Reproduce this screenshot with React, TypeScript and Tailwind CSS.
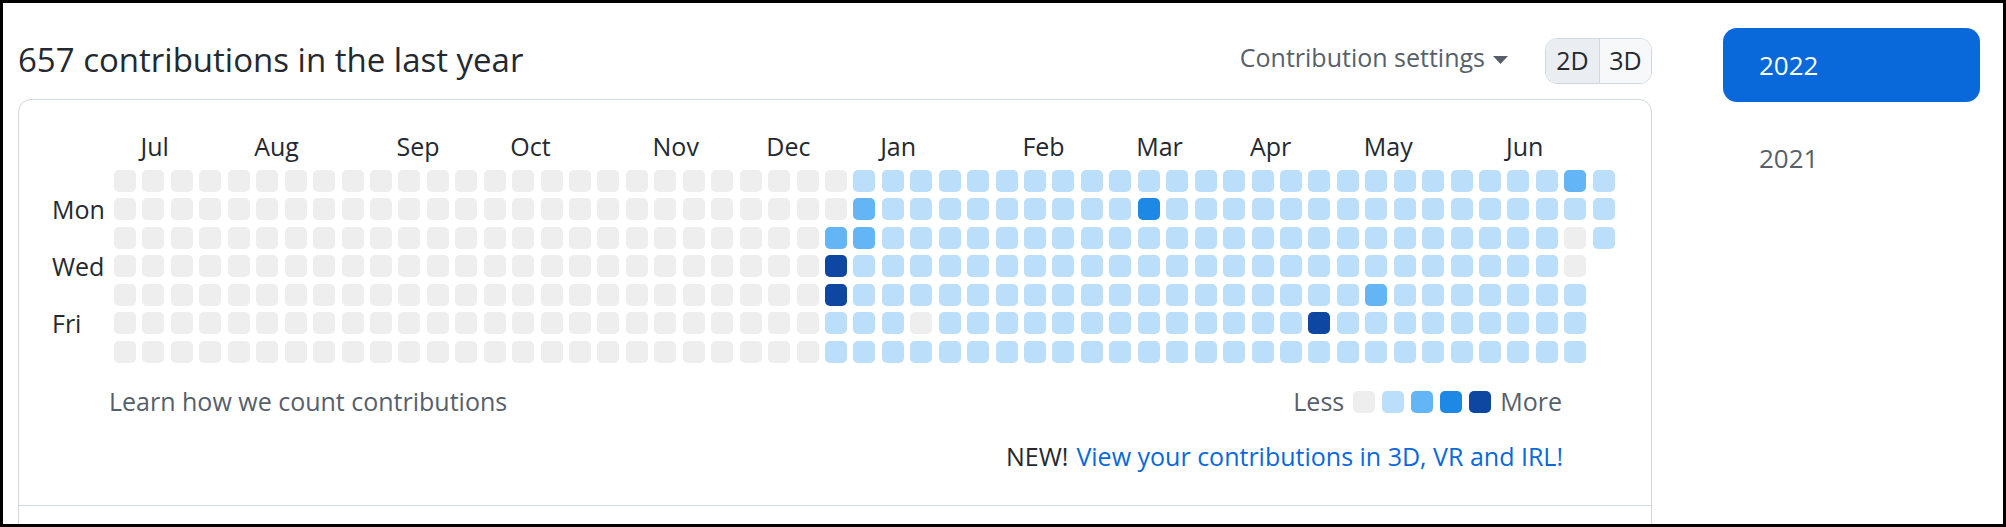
const PITCH = 28.45;

const LEVELS = ["bg-[#eeeeee]", "bg-[#bbdefb]", "bg-[#64b5f6]", "bg-[#1e88e5]", "bg-[#0d47a1]"];

const MONTHS: [string, number][] = [
  ["Jul", 1],
  ["Aug", 5],
  ["Sep", 10],
  ["Oct", 14],
  ["Nov", 19],
  ["Dec", 23],
  ["Jan", 27],
  ["Feb", 32],
  ["Mar", 36],
  ["Apr", 40],
  ["May", 44],
  ["Jun", 49],
];

const SPECIAL: Record<string, number> = {
  "25-0": 0,
  "25-1": 0,
  "25-2": 2,
  "25-3": 4,
  "25-4": 4,
  "26-1": 2,
  "26-2": 2,
  "28-5": 0,
  "36-1": 3,
  "42-5": 4,
  "44-4": 2,
  "51-0": 2,
  "51-2": 0,
  "51-3": 0,
};

function level(col: number, row: number) {
  const key = `${col}-${row}`;
  if (key in SPECIAL) return SPECIAL[key];
  if (col < 25) return 0;
  return 1;
}

const columns = Array.from({ length: 53 }, (_, c) => (c === 52 ? 3 : 7));

export default function App() {
  return (
    <div className="w-[2006px] h-[527px] overflow-hidden border-[3px] border-black bg-white flex font-['Open_Sans',sans-serif]">
      {/* Main column */}
      <div className="ml-[15px] w-[1634px] flex flex-col">
        <div className="mt-[35px] h-[46px] flex items-center justify-between">
          <h2 className="text-[33px] text-[#24292f] leading-none -mt-[4px]">657 contributions in the last year</h2>
          <div className="flex items-center">
            <div className="flex items-center gap-[8px] text-[25px] text-[#57606a] -mt-[6px]">
              <span>Contribution settings</span>
              <svg width="15" height="8" viewBox="0 0 15 8" className="mt-[3px]">
                <path d="M0 0 L15 0 L7.5 8 Z" fill="#57606a" />
              </svg>
            </div>
            <div className="ml-[37px] flex h-[46px] w-[107px] border border-[#d0d7de] rounded-[12px] overflow-hidden text-[25px] text-[#24292f]">
              <div className="w-[54px] flex items-center justify-center bg-[#eaeef2] border-r border-[#d0d7de]">2D</div>
              <div className="flex-1 flex items-center justify-center bg-[#f6f8fa]">3D</div>
            </div>
          </div>
        </div>

        {/* Card */}
        <div className="mt-[15px] border border-[#d0d7de] rounded-t-[13px] flex-1">
          <div className="pl-[33px] pt-[28px] pb-[33px]">
            {/* Month labels */}
            <div className="ml-[60px] h-[42px] flex text-[25px] leading-[36px] text-[#24292f]">
              <div style={{ width: PITCH }} />
              {MONTHS.map(([m, start], i) => {
                const next = i < MONTHS.length - 1 ? MONTHS[i + 1][1] : 53;
                return (
                  <div key={m} style={{ width: (next - start) * PITCH }}>
                    {m}
                  </div>
                );
              })}
            </div>

            {/* Grid */}
            <div className="flex">
              <div className="w-[62px] flex flex-col gap-[6.45px] text-[25px] text-[#24292f]">
                {["", "Mon", "", "Wed", "", "Fri", ""].map((d, i) => (
                  <div key={i} className="h-[22px] leading-[22px] whitespace-nowrap">
                    {d}
                  </div>
                ))}
              </div>
              <div className="flex gap-[6.45px]">
                {columns.map((rows, c) => (
                  <div key={c} className="flex flex-col gap-[6.45px]">
                    {Array.from({ length: rows }, (_, r) => (
                      <div key={r} className={`w-[22px] h-[22px] rounded-[5px] ${LEVELS[level(c, r)]}`} />
                    ))}
                  </div>
                ))}
              </div>
            </div>

            {/* Footer */}
            <div className="mt-[24px] pl-[57px] pr-[89px] h-[30px] flex items-center justify-between text-[25px] text-[#57606a]">
              <span>Learn how we count contributions</span>
              <div className="flex items-center">
                <span className="mr-[9px]">Less</span>
                <div className="flex gap-[7px]">
                  {LEVELS.map((l) => (
                    <div key={l} className={`w-[22px] h-[22px] rounded-[5px] ${l}`} />
                  ))}
                </div>
                <span className="ml-[9px]">More</span>
              </div>
            </div>

            <div className="mt-[25px] pr-[88px] h-[30px] flex items-center justify-end text-[25px]">
              <span className="text-[#24292f]">NEW!</span>
              <span className="ml-[8px] text-[#0969da]">View your contributions in 3D, VR and IRL!</span>
            </div>
          </div>
          <div className="border-t border-[#d0d7de] h-[40px]" />
        </div>
      </div>

      {/* Year list */}
      <div className="ml-[71px] w-[257px] mt-[25px] flex flex-col text-[26px]">
        <div className="h-[74px] rounded-[14px] bg-[#0969da] text-white pl-[36px] flex items-center">2022</div>
        <div className="mt-[19px] h-[74px] pl-[36px] flex items-center text-[#57606a]">2021</div>
      </div>
    </div>
  );
}
